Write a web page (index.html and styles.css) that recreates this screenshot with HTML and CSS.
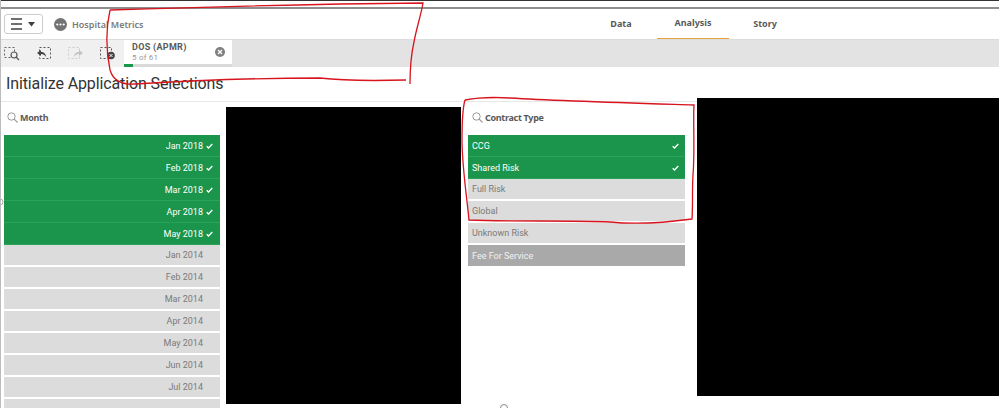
FILE: index.html
```html
<!DOCTYPE html>
<html lang="en">
<head>
<meta charset="utf-8">
<title>Hospital Metrics</title>
<link rel="stylesheet" href="styles.css">
</head>
<body>
<div class="page">
  <div class="topstrip"></div>
  <header class="toolbar">
    <div class="brand">
      <button class="menu-btn" aria-label="Menu">
        <svg width="26" height="12" viewBox="0 0 26 12"><path d="M0 1h11M0 6h11M0 11h11" stroke="#404040" stroke-width="1.4" fill="none"/><path d="M17 4h7l-3.5 4.5z" fill="#404040"/></svg>
      </button>
      <svg class="app-icon" width="13" height="13" viewBox="0 0 13 13"><circle cx="6.5" cy="6.5" r="6.5" fill="#737373"/><circle cx="3.3" cy="6.5" r="1.1" fill="#fff"/><circle cx="6.5" cy="6.5" r="1.1" fill="#fff"/><circle cx="9.7" cy="6.5" r="1.1" fill="#fff"/></svg>
      <span class="app-name">Hospital Metrics</span>
    </div>
    <nav class="tabs">
      <a class="tab">Data</a>
      <a class="tab active">Analysis</a>
      <a class="tab">Story</a>
    </nav>
  </header>
  <div class="selbar">
    <div class="tools">
      <svg class="tool" width="16" height="14" viewBox="0 0 16 14"><rect x=".5" y=".5" width="10" height="10" fill="none" stroke="#666" stroke-dasharray="2 2"/><circle cx="10" cy="8" r="3" fill="#f0f0f0" stroke="#555" stroke-width="1.2"/><path d="M12 10l3 3" stroke="#555" stroke-width="1.3"/></svg>
      <svg class="tool" width="16" height="14" viewBox="0 0 16 14"><rect x="3.5" y=".5" width="11" height="11" fill="none" stroke="#555" stroke-dasharray="2 2"/><path d="M1 6l4-3v2c3 0 5 2 5 5-1-2-3-3-5-3v2z" fill="#444"/></svg>
      <svg class="tool" width="16" height="14" viewBox="0 0 16 14"><rect x=".5" y=".5" width="11" height="11" fill="none" stroke="#ccc" stroke-dasharray="2 2"/><path d="M15 6l-4-3v2c-3 0-5 2-5 5 1-2 3-3 5-3v2z" fill="#c4c4c4"/></svg>
      <svg class="tool" width="16" height="14" viewBox="0 0 16 14"><rect x=".5" y=".5" width="11" height="11" fill="none" stroke="#555" stroke-dasharray="2 2"/><circle cx="11" cy="8.500" r="3.800" fill="#444"/><path d="M9.500 7l3 3M12.500 7l-3 3" stroke="#f0f0f0" stroke-width="1"/></svg>
    </div>
    <div class="chip">
      <div class="chip-body">
        <div>
          <div class="chip-title">DOS (APMR)</div>
          <div class="chip-sub">5 of 61</div>
        </div>
        <svg width="10" height="10" viewBox="0 0 10 10"><circle cx="5" cy="5" r="5" fill="#808080"/><path d="M3 3l4 4M7 3l-4 4" stroke="#fff" stroke-width="1.2"/></svg>
      </div>
      <div class="chip-bar"><div class="chip-fill"></div></div>
    </div>
  </div>
  <h1 class="sheet-title">Initialize Application Selections</h1>
  <main class="sheet">
    <section class="panel month">
      <div class="panel-head">
        <svg width="11" height="11" viewBox="0 0 11 11"><circle cx="4.500" cy="4.500" r="3.700" fill="none" stroke="#999"/><path d="M7.200 7.200l3.300 3.300" stroke="#999" stroke-width="1.100"/></svg>
        <span>Month</span>
      </div>
      <ul class="list right">
        <li class="row sel">Jan 2018<svg class="chk" viewBox="0 0 7 6"><path d="M.7 3.200l1.800 1.800L6.300 1" fill="none" stroke="#fff" stroke-width="1.300"/></svg></li>
        <li class="row sel">Feb 2018<svg class="chk" viewBox="0 0 7 6"><path d="M.7 3.200l1.800 1.800L6.300 1" fill="none" stroke="#fff" stroke-width="1.300"/></svg></li>
        <li class="row sel">Mar 2018<svg class="chk" viewBox="0 0 7 6"><path d="M.7 3.200l1.800 1.800L6.300 1" fill="none" stroke="#fff" stroke-width="1.300"/></svg></li>
        <li class="row sel">Apr 2018<svg class="chk" viewBox="0 0 7 6"><path d="M.7 3.200l1.800 1.800L6.300 1" fill="none" stroke="#fff" stroke-width="1.300"/></svg></li>
        <li class="row sel">May 2018<svg class="chk" viewBox="0 0 7 6"><path d="M.7 3.200l1.800 1.800L6.300 1" fill="none" stroke="#fff" stroke-width="1.300"/></svg></li>
        <li class="row opt">Jan 2014<i class="chk"></i></li>
        <li class="row opt">Feb 2014<i class="chk"></i></li>
        <li class="row opt">Mar 2014<i class="chk"></i></li>
        <li class="row opt">Apr 2014<i class="chk"></i></li>
        <li class="row opt">May 2014<i class="chk"></i></li>
        <li class="row opt">Jun 2014<i class="chk"></i></li>
        <li class="row opt">Jul 2014<i class="chk"></i></li>
        <li class="row opt"></li>
      </ul>
    </section>
    <div class="redact r1"></div>
    <section class="panel contract">
      <div class="panel-head">
        <svg width="11" height="11" viewBox="0 0 11 11"><circle cx="4.500" cy="4.500" r="3.700" fill="none" stroke="#999"/><path d="M7.200 7.200l3.300 3.300" stroke="#999" stroke-width="1.100"/></svg>
        <span>Contract Type</span>
      </div>
      <ul class="list">
        <li class="row sel"><span class="grow">CCG</span><svg class="chk" viewBox="0 0 7 6"><path d="M.7 3.200l1.800 1.800L6.300 1" fill="none" stroke="#fff" stroke-width="1.300"/></svg></li>
        <li class="row sel"><span class="grow">Shared Risk</span><svg class="chk" viewBox="0 0 7 6"><path d="M.7 3.200l1.800 1.800L6.300 1" fill="none" stroke="#fff" stroke-width="1.300"/></svg></li>
        <li class="row opt">Full Risk</li>
        <li class="row opt">Global</li>
        <li class="row opt">Unknown Risk</li>
        <li class="row excl">Fee For Service</li>
      </ul>
    </section>
    <div class="redact r2"></div>
  </main>
  <svg class="marks" width="999" height="408" viewBox="0 0 999 408" fill="none">
    <path d="M110 10C200 7 320 4 423 3C421 15 416 30 414 42C411 55 410 70 410 84M406 80C370 81 345 81 320 78C270 78 200 80 135 84C122 85 113 80 110 70C106 50 106 28 110 10" stroke="#d8141e" stroke-width="1.300"/>
    <path d="M465 100C475 98 495 97 510 98C560 101 630 103 694 105C693 125 695 150 693 175C692 190 693 205 692 219C670 222 640 225 610 222C570 220 510 222 469 220C466 190 462 165 462 140C462 125 462 110 465 100" stroke="#d8141e" stroke-width="1.300"/>
    <circle cx="504" cy="408" r="3.500" stroke="#888"/>
    <circle cx="0" cy="202" r="3" stroke="#aaa"/>
  </svg>
</div>
</body>
</html>
```
FILE: styles.css
```css
* { box-sizing: border-box; }
html, body { margin: 0; padding: 0; background: #fff; }
body { font-family: "Noto Sans", "Liberation Sans", sans-serif; color: #595959; }
.page { position: relative; width: 999px; height: 408px; overflow: hidden; border-left: 1px solid #bdbdbd; }
.topstrip { height: 9px; border-top: 1px solid #333; border-bottom: 2px solid #8e8e8e; }
.toolbar { display: flex; align-items: stretch; justify-content: space-between; height: 30px; }
.brand { display: flex; align-items: center; padding: 0 0 0 3px; }
.menu-btn { display: flex; align-items: center; justify-content: center; width: 39px; height: 20px; padding: 0; background: #fff; border: 1px solid #ccc; border-radius: 3px; }
.app-icon { margin-left: 11px; }
.app-name { margin-left: 5px; font-size: 9px; font-weight: 600; color: #7b7b7b; }
.tabs { display: flex; margin-right: 198px; }
.tab { display: flex; align-items: center; justify-content: center; width: 72px; padding-bottom: 2px; font-size: 9px; font-weight: 700; color: #595959; }
.tab.active { border-bottom: 1px solid #e9a33f; }
.selbar { display: flex; height: 28px; background: #e3e3e3; border-top: 1px solid #dcdcdc; }
.tools { display: flex; align-items: center; gap: 16px; width: 123px; padding-left: 3px; background: #f0f0f0; }
.tool { flex: none; }
.chip { display: flex; flex-direction: column; width: 108px; background: #fff; }
.chip-body { flex: 1; display: flex; align-items: center; justify-content: space-between; padding: 0 7px 0 8px; }
.chip-title { font-family: Roboto, sans-serif; font-size: 9px; font-weight: 700; letter-spacing: .3px; line-height: 11px; color: #595959; }
.chip-sub { font-family: Roboto, sans-serif; font-size: 8px; letter-spacing: .2px; line-height: 9px; color: #999; }
.chip-bar { height: 3px; background: #d9d9d9; }
.chip-fill { width: 9px; height: 100%; background: #1a954b; }
.sheet-title { height: 35px; margin: 0; padding-left: 5px; font-family: Roboto, "Noto Sans", sans-serif; font-size: 16px; font-weight: 400; letter-spacing: -.12px; line-height: 34px; color: #333; border-bottom: 1px solid #e8e8e8; }
.sheet { display: flex; align-items: flex-start; }
.panel-head { display: flex; align-items: center; gap: 2px; height: 33px; padding: 0 0 2px 3px; font-size: 9px; font-weight: 700; color: #595959; }
.panel-head span { letter-spacing: -.3px; }
.panel { flex: none; }
.month { width: 225px; padding: 0 6px 0 3px; }
.contract { width: 217px; margin-left: 7px; }
.contract .panel-head { padding-left: 4px; }
.list { margin: 0; padding: 0; list-style: none; }
.list.right .row { justify-content: flex-end; padding-right: 7px; }
.row { display: flex; align-items: center; height: 22px; padding: 0 4px; font-family: Roboto, "Noto Sans", sans-serif; font-size: 9px; }
.grow { flex: 1; }
.sel { background: #1a954b; color: #fff; border-bottom: 1px solid #2aa35a; }
.opt { background: #dcdcdc; color: #7a7a7a; border-bottom: 2px solid #fff; }
.excl { background: #a9a9a9; color: #f2f2f2; border-bottom: 1px solid #fff; }
.chk { display: block; flex: none; width: 7px; height: 6px; margin-left: 3px; }
.contract .chk { margin-right: 2px; }
.redact { flex: none; background: #000; }
.r1 { width: 235px; height: 297px; margin-top: 5px; }
.r2 { width: 302px; height: 298px; margin-top: -4px; margin-left: 12px; }
.marks { position: absolute; left: -1px; top: 0; pointer-events: none; }
```
